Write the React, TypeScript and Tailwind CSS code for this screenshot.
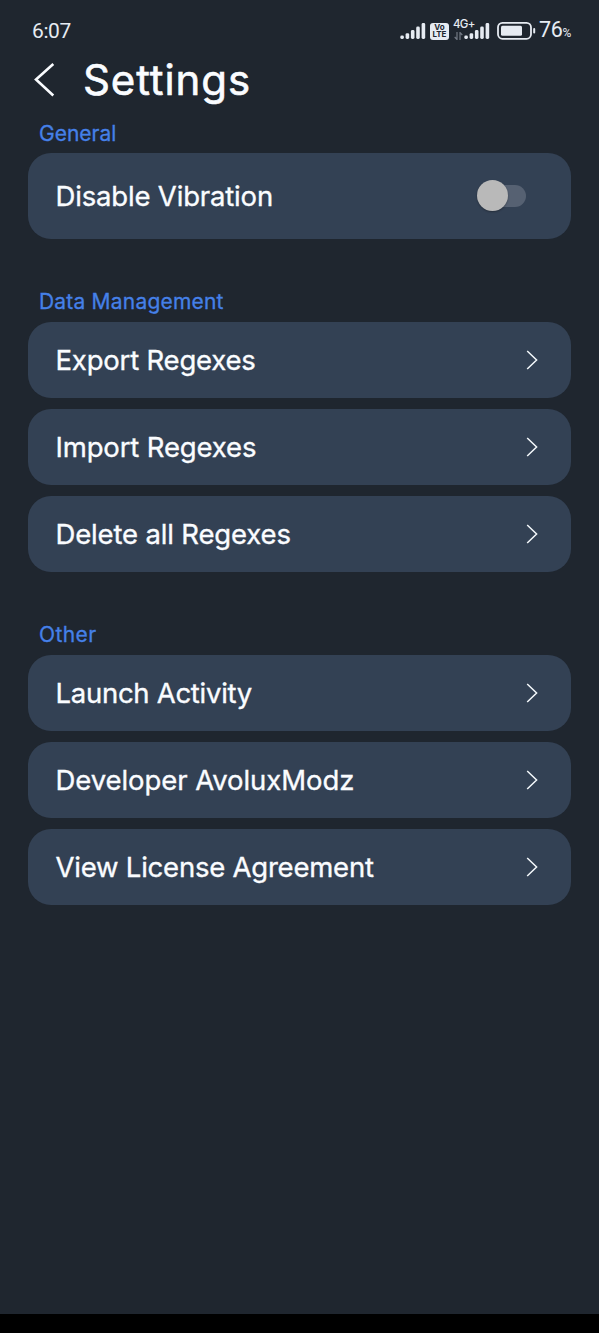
import React from "react";

function Chevron() {
  return (
    <svg className="h-[22px] w-[14px]" viewBox="0 0 14 22" fill="none" stroke="#f4f8fb" strokeWidth="1.5">
      <path d="M2.2 2 L11.6 11 L2.2 20" />
    </svg>
  );
}

function Bars({ className }: { className: string }) {
  return (
    <svg className={className} viewBox="0 0 26 18" fill="#e6ebf2">
      <rect x="0.3" y="13.6" width="3.6" height="3.4" rx="1.4" />
      <rect x="5.6" y="11.2" width="3.6" height="5.8" rx="1.4" />
      <rect x="10.9" y="8" width="3.6" height="9" rx="1.4" />
      <rect x="16.2" y="4.6" width="3.6" height="12.4" rx="1.4" />
      <rect x="21.6" y="1" width="3.6" height="16" rx="1.4" />
    </svg>
  );
}

type Item = { text: string; tracking: string };

function Label({ text, tracking }: Item) {
  return (
    <h2 className="ml-[39px] h-[27px] text-[21px] leading-[27px] font-normal text-[#4580e8] [-webkit-text-stroke:0.3px]">
      <span className={tracking}>{text}</span>
    </h2>
  );
}

function Row({ text, tracking }: Item) {
  return (
    <button className="flex h-[76px] w-full items-center justify-between rounded-[23px] bg-[#334154] pr-[32px] pl-[27.5px] text-left">
      <span className={"text-[27.5px] leading-[36px] font-normal whitespace-nowrap [-webkit-text-stroke:0.35px] " + tracking}>{text}</span>
      <Chevron />
    </button>
  );
}

function Section({ label, items }: { label: Item; items: Item[] }) {
  return (
    <section>
      <Label {...label} />
      <div className="mx-[28px] mt-[7px] flex flex-col gap-[11.2px]">
        {items.map((i) => (
          <Row key={i.text} {...i} />
        ))}
      </div>
    </section>
  );
}

export default function App() {
  return (
    <div className="flex h-[1333px] w-[599px] flex-col overflow-hidden bg-[#1f262f] font-['Inter','Liberation_Sans',sans-serif] text-[#fafcff]">
      <div className="flex h-[55px] shrink-0 items-start justify-between pt-[17px] pr-[28px] pl-[32px] text-[#e6ebf2]">
        <span className="font-['Roboto',sans-serif] text-[21px] leading-[28px] tracking-[-0.4px]">6:07</span>
        <div className="flex h-[28px] items-center">
          <Bars className="h-[18px] w-[26px]" />
          <span className="ml-[4px] flex h-[17px] w-[19px] flex-col items-center justify-center rounded-[3px] bg-[#e6ebf2] text-[8px] leading-[7.5px] font-bold text-[#20252f]">
            <span>Vo</span>
            <span>LTE</span>
          </span>
          <div className="relative ml-[4px] h-[20px] w-[37px]">
            <span className="absolute top-[-2px] left-0 text-[11.5px] leading-[11px] font-medium tracking-[-0.6px]">4G+</span>
            <svg className="absolute top-[11px] left-[1px] h-[8px] w-[9px]" viewBox="0 0 9 8" fill="none" stroke="#727984" strokeWidth="1.2">
              <path d="M3 0v7.5L.7 5M6 8V.5L8.3 3" />
            </svg>
            <Bars className="absolute top-[1px] left-[11px] h-[18px] w-[26px]" />
          </div>
          <svg className="ml-[7px] h-[20px] w-[39px]" viewBox="0 0 39 20" fill="none">
            <rect x="1" y="1.8" width="33" height="16" rx="4.5" stroke="#e6ebf2" strokeWidth="1.8" />
            <rect x="4" y="4.8" width="21" height="10" rx="1.5" fill="#e6ebf2" />
            <rect x="36.2" y="7" width="2" height="5.5" rx="1" fill="#e6ebf2" />
          </svg>
          <span className="mt-[1px] ml-[3px] font-['Roboto',sans-serif] text-[21.5px] leading-[28px] tracking-[-0.3px]">
            76<span className="text-[12px]">%</span>
          </span>
        </div>
      </div>

      <header className="flex h-[50px] shrink-0 items-center pl-[33px]">
        <svg className="h-[36px] w-[24px]" viewBox="0 0 24 36" fill="none" stroke="#fafcff" strokeWidth="2.6">
          <path d="M20.3 2 L3 17.5 L20.3 33.5" />
        </svg>
        <h1 className="ml-[26px] text-[42px] leading-[50px] font-normal tracking-[0.9px] [-webkit-text-stroke:0.6px]">Settings</h1>
      </header>

      <main className="flex flex-1 flex-col pt-[14.5px]">
        <Label text="General" tracking="tracking-normal" />
        <div className="mx-[28px] mt-[6.7px] flex h-[85.4px] shrink-0 items-center justify-between rounded-[23px] bg-[#334154] pr-[45px] pl-[27.5px]">
          <span className="text-[27.5px] leading-[36px] font-normal tracking-[-0.17px] [-webkit-text-stroke:0.35px]">Disable Vibration</span>
          <button role="switch" aria-checked="false" className="flex h-[31px] w-[49px] items-center">
            <span className="ml-[10px] flex h-[22px] w-[39px] items-center rounded-full bg-[#566172]">
              <span className="-ml-[10px] h-[31px] w-[31px] shrink-0 rounded-full bg-[#b9b9b9] shadow-[0_1px_2px_rgba(0,0,0,0.3)]" />
            </span>
          </button>
        </div>

        <div className="mt-[49px]">
          <Section
            label={{ text: "Data Management", tracking: "tracking-[0.2px]" }}
            items={[
              { text: "Export Regexes", tracking: "tracking-[-0.2px]" },
              { text: "Import Regexes", tracking: "tracking-[-0.15px]" },
              { text: "Delete all Regexes", tracking: "tracking-[-0.16px]" },
            ]}
          />
        </div>

        <div className="mt-[49px]">
          <Section
            label={{ text: "Other", tracking: "tracking-[0.4px]" }}
            items={[
              { text: "Launch Activity", tracking: "tracking-[-0.28px]" },
              { text: "Developer AvoluxModz", tracking: "tracking-[-0.07px]" },
              { text: "View License Agreement", tracking: "tracking-[-0.22px]" },
            ]}
          />
        </div>
      </main>
      <div className="h-[19px] shrink-0 bg-black" />
    </div>
  );
}
